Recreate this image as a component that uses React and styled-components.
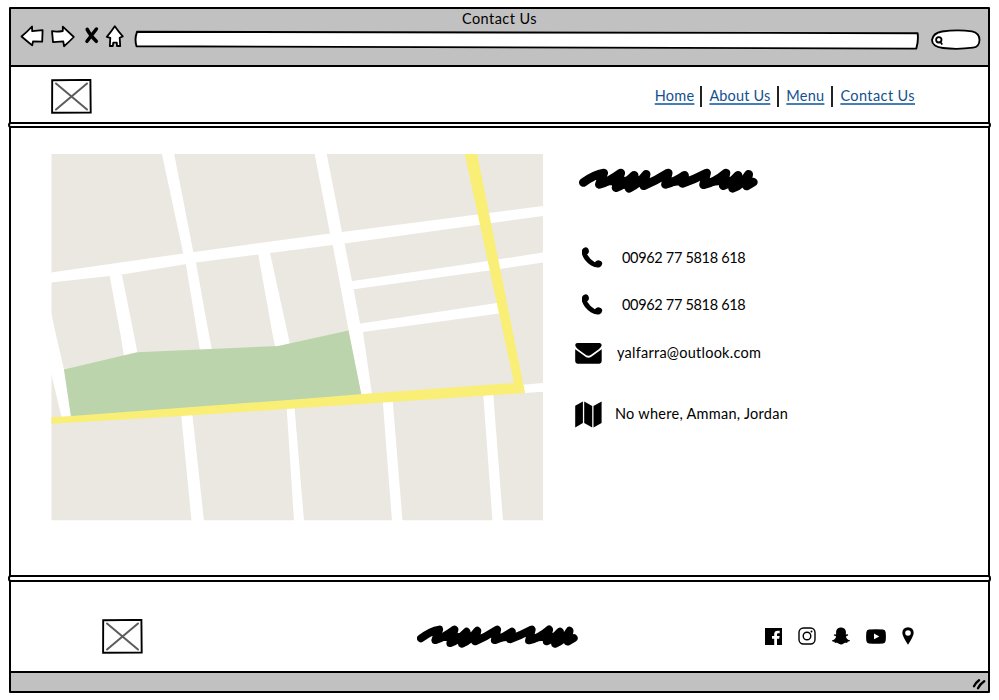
import React from "react";
import styled, { createGlobalStyle } from "styled-components";
import { FaSnapchatGhost } from "react-icons/fa";

const GlobalStyle = createGlobalStyle`
  * { box-sizing: border-box; }
  body {
    margin: 0;
    background: #fff;
    color: #000;
    font-family: Lato, "Liberation Sans", sans-serif;
  }
  svg { display: block; flex: none; }
`;

const Window = styled.div`
  display: flex;
  flex-direction: column;
  width: 981px;
  height: 686px;
  margin: 7px 0 0 9px;
  border: 2px solid #000;
  border-radius: 1px;
`;

const Chrome = styled.header`
  display: flex;
  flex-direction: column;
  height: 58px;
  background: #c1c1c1;
  border-bottom: 2px solid #000;
`;

const Title = styled.h1`
  margin: 0;
  font-size: 14.5px;
  font-weight: 400;
  line-height: 18px;
  height: 16px;
  text-align: center;
`;

const Text = styled.span`
  font-size: 14.5px;
  letter-spacing: ${(p) => p.$spacing || 0}px;
  line-height: 20px;
  white-space: nowrap;
`;

const Toolbar = styled.div`
  display: flex;
  align-items: flex-start;
  height: 30px;
  padding-left: 8px;
`;

const FieldSlot = styled.div`
  margin: ${(p) => p.$top}px 0 0 ${(p) => p.$left}px;
`;

const NavBar = styled.nav`
  display: flex;
  align-items: center;
  justify-content: space-between;
  height: 55px;
  padding: 4px 73px 0 40px;
`;

const Links = styled.div`
  display: flex;
  align-items: center;
  height: 21px;
`;

const NavLink = styled.a`
  padding: 0 7px;
  color: #12518f;
  font-size: 14.5px;
  line-height: 20px;
  height: 21px;
  letter-spacing: ${(p) => p.$spacing}px;
  text-decoration: underline;
  text-decoration-color: #4480b5;
  text-decoration-thickness: 1.5px;
  text-underline-offset: 2px;
  & + & { border-left: 2px solid #222; }
  &:first-child { padding-right: 6px; }
  &:last-child { padding-right: 0; }
`;

const Rule = styled.div`
  height: ${(p) => p.$height}px;
  margin: 0 -3px;
  border: 2px solid #000;
  border-radius: 3px;
  background: #fff;
  flex: none;
`;

const Main = styled.main`
  display: flex;
  align-items: flex-start;
  height: 447px;
  padding: 26px 0 0 40px;
`;

const Details = styled.section`
  display: flex;
  flex-direction: column;
  margin-left: 32px;
  padding-top: 14px;
`;

const ContactHeading = styled.div`
  padding-left: 4px;
`;

const ContactRow = styled.div`
  display: grid;
  grid-template-columns: ${(p) => p.$column}px auto;
  align-items: center;
  height: 28px;
  margin-top: ${(p) => p.$gap}px;
  padding-left: ${(p) => p.$indent || 0}px;
`;

const Footer = styled.footer`
  display: grid;
  grid-template-columns: 315px 1fr auto;
  align-items: center;
  height: 89px;
  padding: 19px 74px 0 91px;
`;

const Social = styled.div`
  display: grid;
  grid-template-columns: 18px 18px 18px 20px 12px;
  column-gap: 16px;
  align-items: center;
  justify-items: center;
`;

const StatusBar = styled.div`
  display: flex;
  align-items: center;
  justify-content: flex-end;
  flex: 1;
  padding: 4px 2px 0 0;
  background: #c1c1c1;
  border-top: 2px solid #000;
`;

const BrowserIcons = () => (
  <svg width="108" height="24" viewBox="19 25 108 24" fill="#fff" stroke="#000" strokeWidth="1.8" strokeLinejoin="round" strokeLinecap="round">
    <path d="M21.5 36.5Q27 32 32 26.5L32.2 31.2L42.6 30.2L42.2 41.6L33 41.4L32.2 45.4Q28 42 21.5 36.5Z" />
    <path d="M52 31.2Q57 32 62.8 31V26.7L73.8 37Q69 42 64 46.2L63.3 41.4L53 42.2Z" />
    <path d="M87.2 29.4Q90 35 96.3 41.3M96.4 29Q91 36 87 41.3" strokeWidth="3.5" />
    <path d="M114.8 26.3Q118 31 122.8 36.4L119.7 37.8L120.2 46H117L116.8 42.6H113.3L112.8 46H109.8L110.3 37.8L106.8 36.8Q111 32 114.8 26.3Z" />
  </svg>
);

const AddressField = () => (
  <svg width="786" height="20" viewBox="134 30 786 20" fill="#fff" stroke="#000" strokeWidth="1.9" strokeLinejoin="round">
    <path d="M137 31.8Q520 31.7 917.6 33.2Q918.7 40 916.3 48.6Q520 46.6 136.5 46.3Q134.3 39 137 31.8Z" />
  </svg>
);

const SearchField = () => (
  <svg width="52" height="22" viewBox="930 29 52 22" fill="#fff" stroke="#000" strokeWidth="1.8">
    <path d="M942 31.5Q957 29.5 972 31.3Q979.5 33 979.5 40Q979.3 47 973 47.7Q957 49.7 943 48Q932 46.5 932 40Q933 33 942 31.5Z" />
    <circle cx="938.8" cy="39.8" r="2.7" />
    <path d="M940.3 42L942.3 44.5" />
  </svg>
);

const ImagePlaceholder = () => (
  <svg width="41" height="35" viewBox="0 0 41 35" fill="none">
    <path d="M1.2 1.2L39.4 .9L39.7 33.6L1.1 33.8Z" stroke="#000" strokeWidth="1.9" />
    <path d="M5 4.5L36 30.5M36 4.5L5 30.5" stroke="#5c5c5c" strokeWidth="2" strokeLinecap="round" />
  </svg>
);

const Scribble = ({ width, height }) => (
  <svg width={width} height={height} viewBox="58 54 536 76" preserveAspectRatio="none">
    <path
      d="M71 98Q105 73 132 69Q126 82 119 104Q145 97 183 69L169 114Q195 104 223 76L208 116Q236 103 259 73L252 108Q288 93 325 69L317 104Q350 94 374 76L368 101Q402 89 440 69L431 105Q466 97 498 69L490 108Q514 99 534 76L518 116Q548 104 566 73L560 109L580 97"
      fill="none" stroke="#000" strokeWidth="26" strokeLinecap="round" strokeLinejoin="round"
    />
    <path d="M168 82L248 78L262 98L210 118L165 116L150 100ZM480 82L570 80L582 100L520 116L484 108L468 96ZM118 92L150 82L165 106L120 108ZM318 90L378 84L372 106L318 110ZM428 88L480 82L484 106L432 110Z" />
  </svg>
);

const StreetMap = () => (
  <svg width="492" height="367" viewBox="51 154 492 367">
    <path fill="#ebe8e1" d="M51.5 154H543V520.3H51.5Z" />
    <g fill="#fff">
      <path d="M51 272.5L183 253.5L330 233.5L342 232L543 206V216L344.5 243.5L196 262.5L122 274.5L109.5 276L51 282.5Z" />
      <path d="M161.7 153H174L193.5 253L196 263L209 335L212 350H200L197.5 335L186 265L183.3 253.5Z" />
      <path d="M314.5 153H326.5L342 232L344.5 243.5L352 281L360 323L363 332L372 395H361L348.5 330L332.5 243.5L330 233.5Z" />
      <path d="M109.5 275H122L134 335L137.5 353L124 356L120.5 335Z" />
      <path d="M258 253H270L288 335L290 345L275.5 348L272.7 335Z" />
      <path d="M351 281.2L488 261L543 252.5V262.5L489 270.5L352 289.5Z" />
      <path d="M359 323.7L497 303L509 309L499 313.5L361 332.3Z" />
      <path d="M51 312L56 335L64 369.5L71.5 417H61.5L51 373Z" />
      <path d="M181 413H192.2L204 521H191.5Z" />
      <path d="M286.5 405H294.3L304 521H294Z" />
      <path d="M382.5 398H392.5L402.5 521H392Z" />
      <path d="M483 391H493L503 521H492.5Z" />
      <path d="M523 384.7L543 383V391.7L525 393Z" />
    </g>
    <path fill="#bcd4ab" d="M64 369.5L137 352.3L278 346L348.5 330.5L361.5 395L71 417Z" />
    <path fill="#f9ee76" d="M51.5 417.3L71 416L305 398.7L362 394L514 383L464.5 153H477L525 393L305 407.7L182 416L51.5 423.7Z" />
  </svg>
);

const PhoneIcon = () => (
  <svg width="21" height="23" viewBox="0.5 0 21 23">
    <path d="M.5 3Q1.4.7 4 .3Q7 .5 7.5 4.2Q7.5 6 5.6 7.6Q8 12 13.3 15.2Q15.2 13.2 17 13.3Q20.4 13.8 20.8 16.6Q20.4 19.3 18.1 20.3Q14.5 21.3 9.2 18.2Q2.2 13.7.4 7Q-.1 4.6.5 3Z" />
  </svg>
);

const MailIcon = () => (
  <svg width="27" height="21" viewBox="0 0 27 21">
    <path d="M2.4 0H24.6Q26.7.2 26.7 2.3Q26.3 4.4 23.8 6.2L16.4 11.4Q13.4 14.2 10.3 11.4L2.7 6Q.4 4.3.2 2.1Q.4.2 2.4 0ZM.2 6.2L9.2 12.7Q13.4 16.6 17.7 12.7L26.7 6.2V18.3Q26.5 20.7 24.3 20.8H2.5Q.4 20.5.2 18.3Z" />
  </svg>
);

const MapIcon = () => (
  <svg width="27" height="27" viewBox="0 0 27 27">
    <path d="M.2 4.8L7.9.4V21.9L.2 26.5ZM9.2.4L17.2 5V26.5L9.2 21.9ZM18.5 5L26.6.4V21.9L18.5 26.5Z" />
  </svg>
);

const FacebookIcon = () => (
  <svg width="17" height="17" viewBox="0 0 17 17">
    <path d="M0 0H17V17H12V10.7H14.2L14.6 8H12V6.5Q12 5.2 13.3 5.2H14.7V2.8H12.8Q9.2 2.8 9.2 6.2V8H7V10.7H9.2V17H0Z" />
  </svg>
);

const InstagramIcon = () => (
  <svg width="18" height="18" viewBox="0 0 18 18" fill="none" stroke="#000" strokeWidth="1.4">
    <rect x="1" y="1" width="16" height="16" rx="4.5" />
    <circle cx="9" cy="9" r="3.8" />
    <circle cx="13.5" cy="4.6" r="1" fill="#000" stroke="none" />
  </svg>
);

const YoutubeIcon = () => (
  <svg width="20" height="15" viewBox="0 0 20 15">
    <path fillRule="evenodd" d="M3 .6Q10 0 17 .6Q19.3.8 19.6 3Q20.2 7.5 19.6 12Q19.3 14.1 17 14.4Q10 15 3 14.4Q.7 14.1.4 12Q-.2 7.5.4 3Q.7.8 3 .6ZM8 4.5V10.3L13.3 7.4Z" />
  </svg>
);

const PinIcon = () => (
  <svg width="12" height="18" viewBox="0 0 12 18">
    <path fillRule="evenodd" d="M6 .3Q11.5.6 11.7 6Q11.4 9.5 6 17.8Q.6 9.5.3 6Q.5.6 6 .3ZM6 3.2A2.8 2.8 0 1 0 6 8.8A2.8 2.8 0 1 0 6 3.2Z" />
  </svg>
);

const ResizeGrip = () => (
  <svg width="14" height="13" viewBox="0 0 14 13" stroke="#000" strokeWidth="2.4" strokeLinecap="round">
    <path d="M2 8.2Q3.8 4.5 7 2.2M6 10.2Q8 6 12.2 3.2" fill="none" />
  </svg>
);

const LINKS = [
  ["Home", 0.25],
  ["About Us", 0.15],
  ["Menu", 0.25],
  ["Contact Us", 0.4],
];

const CONTACTS = [
  { icon: <PhoneIcon />, text: "00962 77 5818 618", column: 40, gap: 51, indent: 7, spacing: -0.32 },
  { icon: <PhoneIcon />, text: "00962 77 5818 618", column: 40, gap: 19, indent: 7, spacing: -0.32 },
  { icon: <MailIcon />, text: "yalfarra@outlook.com", column: 42, gap: 20, spacing: 0.25 },
  { icon: <MapIcon />, text: "No where, Amman, Jordan", column: 40, gap: 33, spacing: 0.27 },
];

export default function App() {
  return (
    <>
      <GlobalStyle />
      <Window>
        <Chrome>
          <Title><Text $spacing={0.45}>Contact Us</Text></Title>
          <Toolbar>
            <BrowserIcons />
            <FieldSlot $top={5} $left={7}><AddressField /></FieldSlot>
            <FieldSlot $top={4} $left={10}><SearchField /></FieldSlot>
          </Toolbar>
        </Chrome>
        <NavBar>
          <ImagePlaceholder />
          <Links>
            {LINKS.map(([label, spacing]) => (
              <NavLink key={label} $spacing={spacing}>{label}</NavLink>
            ))}
          </Links>
        </NavBar>
        <Rule $height={6} />
        <Main>
          <StreetMap />
          <Details>
            <ContactHeading><Scribble width={179} height={25} /></ContactHeading>
            {CONTACTS.map((c, i) => (
              <ContactRow key={i} $column={c.column} $gap={c.gap} $indent={c.indent}>
                {c.icon}
                <Text $spacing={c.spacing}>{c.text}</Text>
              </ContactRow>
            ))}
          </Details>
        </Main>
        <Rule $height={7} />
        <Footer>
          <ImagePlaceholder />
          <Scribble width={161} height={23} />
          <Social>
            <FacebookIcon />
            <InstagramIcon />
            <FaSnapchatGhost size={18} />
            <YoutubeIcon />
            <PinIcon />
          </Social>
        </Footer>
        <StatusBar><ResizeGrip /></StatusBar>
      </Window>
    </>
  );
}
